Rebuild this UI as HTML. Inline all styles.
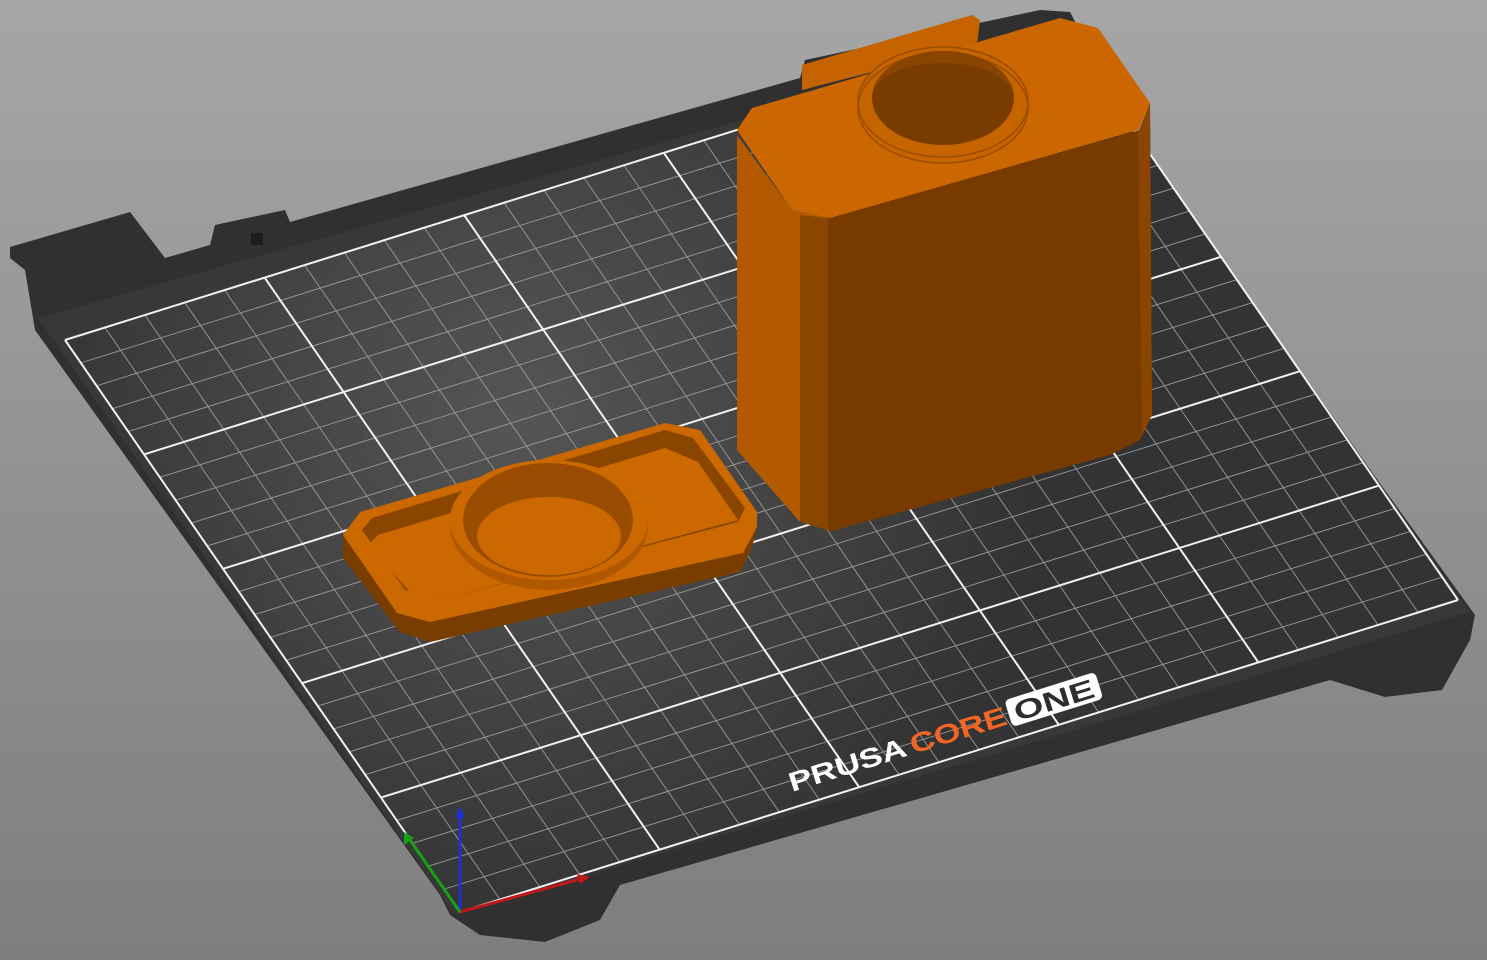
<!DOCTYPE html>
<html><head><meta charset="utf-8"><style>
html,body{margin:0;padding:0;width:1487px;height:960px;overflow:hidden}
body{background:linear-gradient(#a6a6a6,#7e7e7e)}
svg{position:absolute;left:0;top:0}
</style></head><body>
<svg width="1487" height="960" viewBox="0 0 1487 960">
<defs>
<radialGradient id="hl" cx="520" cy="420" r="520" gradientUnits="userSpaceOnUse">
<stop offset="0" stop-color="#555"/><stop offset="1" stop-color="#333"/></radialGradient>
</defs>
<!-- bed -->
<polygon fill="#303030" points="10,247 130,212 165,258 210,245 215,225 285,210 290,222 800,78 805,60 1040,10 1070,12 1150,165 1475,615 1470,640 1442,690 1385,697 1330,680 620,885 600,920 545,942 480,935 450,915 440,895 35,330 30,300 25,270 10,258"/>
<polygon fill="#383838" points="38,318 1062,30 1470,612 455,915"/>
<polygon fill="url(#hl)" points="65,340 1063,28 1458,600 460,912"/>
<rect x="251" y="233" width="12" height="12" fill="#1e1e1e"/>
<!-- grid -->
<g transform="matrix(3.992,-1.248,-1.58,-2.288,460,912)" fill="none">
<path stroke="#9a9a9a" stroke-width="0.9" vector-effect="non-scaling-stroke" d="M10 0V250M20 0V250M30 0V250M40 0V250M60 0V250M70 0V250M80 0V250M90 0V250M110 0V250M120 0V250M130 0V250M140 0V250M160 0V250M170 0V250M180 0V250M190 0V250M210 0V250M220 0V250M230 0V250M240 0V250M0 10H250M0 20H250M0 30H250M0 40H250M0 60H250M0 70H250M0 80H250M0 90H250M0 110H250M0 120H250M0 130H250M0 140H250M0 160H250M0 170H250M0 180H250M0 190H250M0 210H250M0 220H250M0 230H250M0 240H250"/>
<path stroke="#f2f2f2" stroke-width="2" vector-effect="non-scaling-stroke" d="M0 0V250M50 0V250M100 0V250M150 0V250M200 0V250M250 0V250M0 0H250M0 50H250M0 100H250M0 150H250M0 200H250M0 250H250"/>
</g>
<!-- logo -->
<g transform="translate(792,792) rotate(-17.4)" font-family="Liberation Sans,sans-serif" font-weight="bold" font-size="27">
<text x="0" y="0" fill="#fff" textLength="122" lengthAdjust="spacingAndGlyphs">PRUSA</text>
<text x="127" y="0" fill="#f26522" textLength="100" lengthAdjust="spacingAndGlyphs">CORE</text>
<rect x="230" y="-24" width="95" height="28" rx="5" fill="#fff"/>
<text x="236" y="0" fill="#2e2e2e" textLength="83" lengthAdjust="spacingAndGlyphs">ONE</text>
</g>
<!-- axes -->
<line x1="460" y1="912" x2="460" y2="815" stroke="#1f2fd0" stroke-width="3"/>
<polygon points="455,818 465,818 460,806" fill="#1f2fd0"/>
<line x1="460" y1="912" x2="580" y2="879" stroke="#c01818" stroke-width="3"/>
<polygon points="577,874 580,884 590,877" fill="#c01818"/>
<line x1="460" y1="912" x2="410" y2="840" stroke="#18a018" stroke-width="3"/>
<polygon points="404,845 414,838 404,832" fill="#18a018"/>
<!-- tray -->
<polygon fill="#7a3d00" points="343,535 343,558 400,632 430,642 740,572 752,548 757,527 743,553 430,622 397,613"/>
<polygon fill="#cc6800" points="343,535 360,512 665,423 700,430 757,512 757,527 743,553 430,622 397,613"/>
<polygon fill="#8a4600" points="362,530 372,518 665,430 693,438 745,508 738,522 440,600 405,590"/>
<polygon fill="#cc6800" points="368,545 378,535 665,448 698,462 738,520 440,600 410,592"/>
<ellipse cx="549" cy="525" rx="99" ry="65" fill="#b05800"/>
<ellipse cx="549" cy="520" rx="99" ry="60" fill="#cc6800"/>
<ellipse cx="548" cy="520" rx="85" ry="57" fill="#9a4c00"/>
<ellipse cx="549" cy="536" rx="72" ry="39" fill="#cc6800"/>
<!-- box -->
<polygon fill="#c46300" points="802,65 972,15 980,20 977,45 802,90"/>
<polygon fill="#b35a00" points="737,135 792,210 830,218 828,530 800,522 737,450"/>
<polygon fill="#773b00" points="828,218 1140,130 1150,103 1152,415 1140,440 1110,455 828,532"/>
<polygon fill="#8a4500" points="1138,132 1150,103 1152,415 1142,435"/>
<polygon fill="#cc6600" points="737,130 752,108 1060,18 1098,28 1150,103 1138,130 830,218 792,210"/>
<polygon fill="#8a4500" points="800,215 828,218 828,530 800,522"/>
<ellipse cx="943" cy="105" rx="88" ry="58" fill="#c66400"/>
<ellipse cx="943" cy="102" rx="85" ry="55" fill="none" stroke="#9a4c00" stroke-width="1.5"/>
<ellipse cx="943" cy="108" rx="85" ry="55" fill="none" stroke="#9a4c00" stroke-width="1.5"/>
<ellipse cx="943" cy="98" rx="71" ry="47" fill="#783c00"/>
<path d="M872,98 A71,47 0 0 1 1014,98 A71,35 0 0 0 872,98Z" fill="#884400"/>
</svg>
</body></html>
